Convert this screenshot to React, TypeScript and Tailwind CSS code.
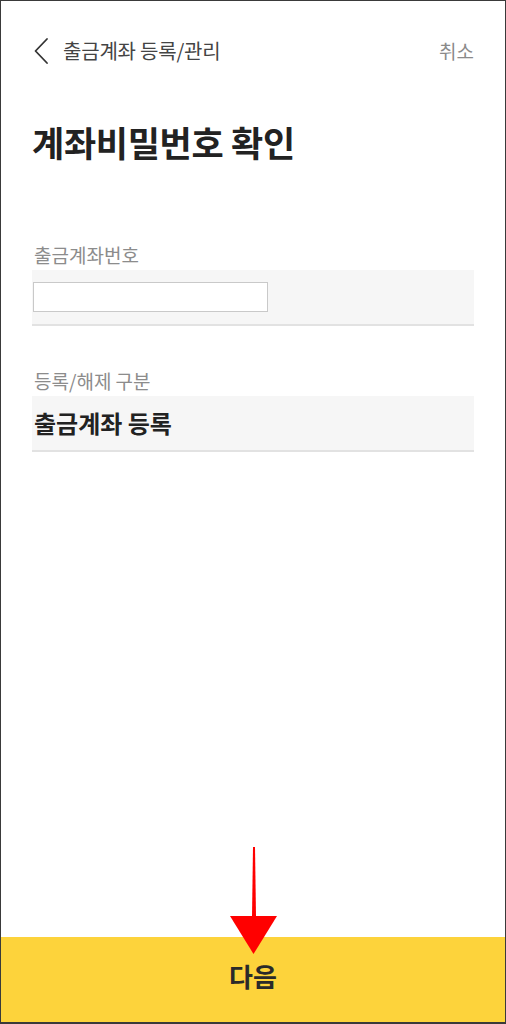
const font = { fontFamily: '"Noto Sans CJK KR", "Noto Sans", sans-serif' };

const App = () => {
  return (
    <div
      className="relative flex flex-col h-[1024px] w-full bg-white border border-[#3a3a3a] border-b-2 overflow-hidden"
      style={font}
    >
      {/* header */}
      <div className="flex items-center justify-between pl-[32px] pr-[31px] pt-[35px] h-[65px]">
        <div className="flex items-center gap-[14px]">
          <svg width="16" height="28" viewBox="0 0 16 28" className="text-[#333]">
            <path
              d="M14 2 L2.5 14 L14 26"
              fill="none"
              stroke="currentColor"
              strokeWidth="1.8"
              strokeLinecap="round"
              strokeLinejoin="round"
            />
          </svg>
          <span className="text-[20px] text-[#444] tracking-[-0.2px]">
            출금계좌 등록/관리
          </span>
        </div>
        <span className="text-[19px] text-[#8a8a8a]">취소</span>
      </div>

      <h1 className="px-[31px] mt-[52px] text-[35px] leading-[48px] font-bold text-[#222] tracking-[-0.3px]">
        계좌비밀번호 확인
      </h1>

      <div className="px-[31px] mt-[76px]">
        <p className="pl-[2px] text-[19px] text-[#8c8c8c] leading-[26px]">출금계좌번호</p>
        <div className="mt-[2px] h-[56px] bg-[#f6f6f6] border-b-2 border-[#e2e2e2] flex items-center">
          <div className="ml-[1px] w-[235px] h-[30px] bg-white border border-[#c9c9c9]" />
        </div>

        <p className="mt-[42px] pl-[2px] text-[19px] text-[#8c8c8c] leading-[26px]">
          등록/해제 구분
        </p>
        <div className="mt-[2px] h-[56px] bg-[#f6f6f6] border-b-2 border-[#e2e2e2] flex items-center pl-[2px]">
          <span className="text-[24px] font-bold text-[#222]">출금계좌 등록</span>
        </div>
      </div>

      <button className="mt-auto h-[85px] w-full bg-[#fdd33b] flex items-center justify-center">
        <span className="text-[26px] font-bold text-[#2a2a2a] -mt-[8px]">다음</span>
      </button>

      {/* annotation arrow */}
      <svg
        className="absolute left-[228px] top-[845px]"
        width="50"
        height="110"
        viewBox="0 0 50 110"
      >
        <polygon points="24,1 26,1 27,71 23,71" fill="#ff0000" />
        <polygon points="1,70 48,70 24.5,108" fill="#ff0000" />
      </svg>
    </div>
  );
};

export default App;
